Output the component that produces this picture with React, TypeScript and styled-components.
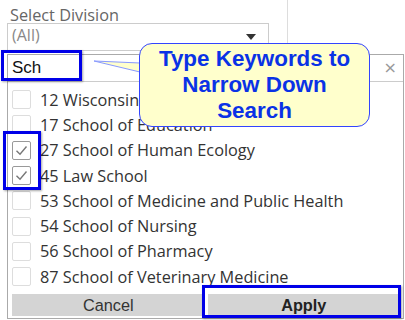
import React from "react";
import styled, { createGlobalStyle } from "styled-components";

const Global = createGlobalStyle`
  html, body { margin: 0; padding: 0; background: #fff; }
  body { font-family: "Open Sans", "Noto Sans", sans-serif; }
`;

const Page = styled.div`
  position: relative;
  width: 405px;
  height: 320px;
  overflow: hidden;
  background: #fff;
`;

const TopRow = styled.div`
  display: flex;
  align-items: stretch;
  height: 60px;
`;

const Filter = styled.div`
  display: flex;
  flex-direction: column;
  padding-left: 7px;
  width: 262px;
`;

const Label = styled.div`
  font-size: 16.3px;
  line-height: 20px;
  color: #666;
  padding: 5px 0 0 3px;
  height: 23px;
  box-sizing: border-box;
`;

const Dropdown = styled.div`
  position: relative;
  height: 28px;
  border: 1px solid #ccc;
  box-sizing: border-box;
  font-size: 16px;
  color: #888;
  padding: 1px 0 0 4px;
  line-height: 20px;
`;

const Caret = styled.span`
  position: absolute;
  right: 12px;
  top: 10px;
  width: 0;
  height: 0;
  border-left: 5px solid transparent;
  border-right: 5px solid transparent;
  border-top: 6px solid #333;
`;

const VLine = styled.div`
  width: 1px;
  background: #ddd;
  margin-left: 18px;
`;

const Popup = styled.div`
  position: absolute;
  left: 7px;
  top: 54px;
  width: 397px;
  height: 265px;
  box-sizing: border-box;
  border: 1px solid #aaa;
  background: #fff;
  display: flex;
  flex-direction: column;
`;

const SearchRow = styled.div`
  display: flex;
  align-items: center;
  justify-content: space-between;
  height: 26px;
  border-bottom: 1px solid #ccc;
  padding: 0 6px 0 4px;
  flex: none;
`;

const SearchText = styled.span`
  font-family: "Liberation Sans", Arial, sans-serif;
  font-size: 17px;
  color: #111;
`;

const Close = styled.span`
  font-family: "DejaVu Sans", sans-serif;
  font-size: 16px;
  color: #999;
  line-height: 16px;
`;

const List = styled.div`
  display: flex;
  flex-direction: column;
  padding: 5px 0 0 4px;
`;

const Row = styled.div`
  display: flex;
  align-items: center;
  height: 25.3px;
  gap: 9px;
`;

const Box = styled.span<{ $checked?: boolean }>`
  width: 19px;
  height: 19px;
  box-sizing: border-box;
  border: 1px solid ${(p) => (p.$checked ? "#999" : "#ddd")};
  border-radius: 2px;
  display: flex;
  align-items: center;
  justify-content: center;
  flex: none;
  background: #fff;
`;

const ItemText = styled.span`
  font-size: 16.3px;
  color: #333;
  white-space: nowrap;
`;

const Buttons = styled.div`
  display: flex;
  gap: 3px;
  padding: 5px 3px 0 4px;
`;

const Btn = styled.div<{ $primary?: boolean }>`
  flex: 1;
  height: 22px;
  background: #d4d4d4;
  display: flex;
  align-items: center;
  justify-content: center;
  font-family: "Liberation Sans", Arial, sans-serif;
  font-size: 16.3px;
  font-weight: ${(p) => (p.$primary ? 700 : 400)};
  color: ${(p) => (p.$primary ? "#222" : "#333")};
`;

const Highlight = styled.div<{ $l: number; $t: number; $w: number; $h: number }>`
  position: absolute;
  left: ${(p) => p.$l}px;
  top: ${(p) => p.$t}px;
  width: ${(p) => p.$w}px;
  height: ${(p) => p.$h}px;
  box-sizing: border-box;
  border: 3px solid #0000e8;
  box-shadow: 1px 1px 2px rgba(0, 0, 0, 0.35);
`;

const Callout = styled.div`
  position: absolute;
  left: 139px;
  top: 43px;
  width: 231px;
  height: 84px;
  box-sizing: border-box;
  background: #ffffcc;
  border: 1px solid #3344ff;
  border-radius: 13px;
  display: flex;
  align-items: center;
  justify-content: center;
  text-align: center;
  font-family: "Liberation Sans", Arial, sans-serif;
  font-weight: 700;
  font-size: 22.4px;
  line-height: 26px;
  color: #0a32e6;
`;

const Tail = styled.svg`
  position: absolute;
  left: 90px;
  top: 55px;
  overflow: visible;
`;

const Check = () => (
  <svg width="13" height="11" viewBox="0 0 13 11">
    <path d="M1.5 5.8 L5 9.2 L11.5 1.5" fill="none" stroke="#777" strokeWidth="1.4" />
  </svg>
);

const items: { label: string; checked?: boolean }[] = [
  { label: "12 Wisconsin State Lab of Hygiene" },
  { label: "17 School of Education" },
  { label: "27 School of Human Ecology", checked: true },
  { label: "45 Law School", checked: true },
  { label: "53 School of Medicine and Public Health" },
  { label: "54 School of Nursing" },
  { label: "56 School of Pharmacy" },
  { label: "87 School of Veterinary Medicine" },
];

export default function App() {
  return (
    <>
      <Global />
      <Page>
        <TopRow>
          <Filter>
            <Label>Select Division</Label>
            <Dropdown>
              (All)
              <Caret />
            </Dropdown>
          </Filter>
          <VLine />
        </TopRow>
        <Popup>
          <SearchRow>
            <SearchText>Sch</SearchText>
            <Close>×</Close>
          </SearchRow>
          <List>
            {items.map((it) => (
              <Row key={it.label}>
                <Box $checked={it.checked}>{it.checked && <Check />}</Box>
                <ItemText>{it.label}</ItemText>
              </Row>
            ))}
          </List>
          <Buttons>
            <Btn>Cancel</Btn>
            <Btn $primary>Apply</Btn>
          </Buttons>
        </Popup>
        <Highlight $l={1} $t={50} $w={81} $h={31} />
        <Highlight $l={3} $t={131} $w={38} $h={59} />
        <Highlight $l={202} $t={285} $w={199} $h={33} />
        <Tail width="60" height="30">
          <polygon points="4,6 50,8 50,17" fill="#ffffcc" stroke="#8899ff" strokeWidth="1" />
        </Tail>
        <Callout>
          Type Keywords to
          <br />
          Narrow Down
          <br />
          Search
        </Callout>
      </Page>
    </>
  );
}
